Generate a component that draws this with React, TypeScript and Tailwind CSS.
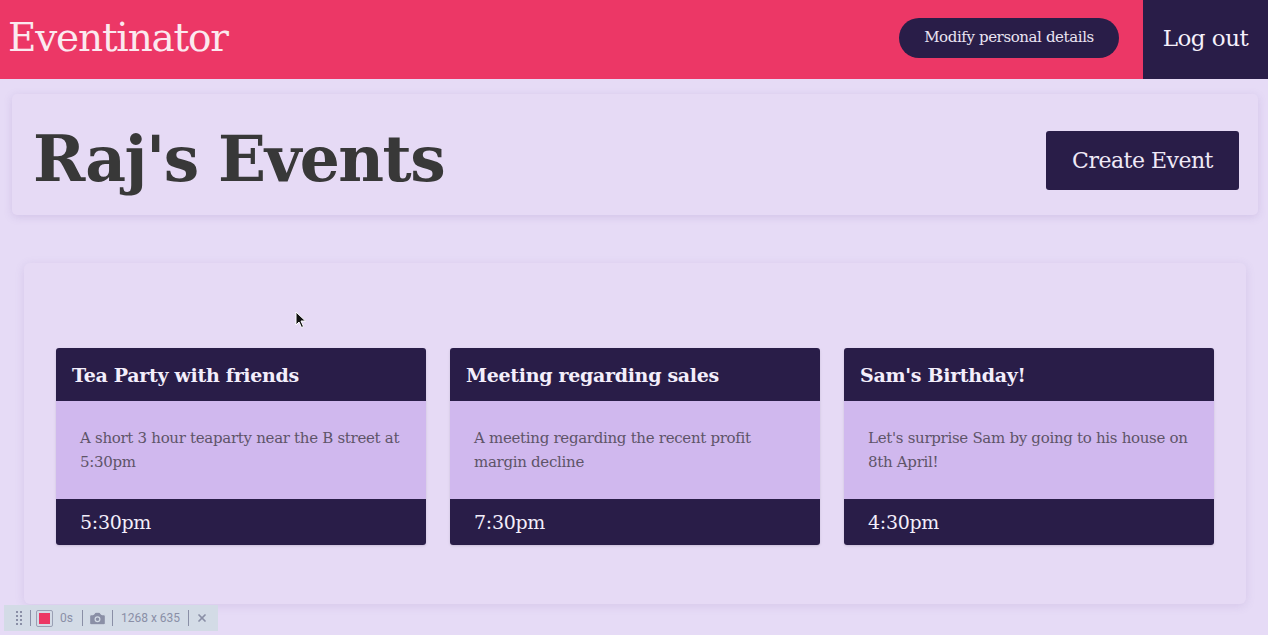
import { Camera, X } from 'lucide-react'

const events = [
  {
    title: 'Tea Party with friends',
    description: 'A short 3 hour teaparty near the B street at 5:30pm',
    time: '5:30pm',
  },
  {
    title: 'Meeting regarding sales',
    description: 'A meeting regarding the recent profit margin decline',
    time: '7:30pm',
  },
  {
    title: "Sam's Birthday!",
    description: "Let's surprise Sam by going to his house on 8th April!",
    time: '4:30pm',
  },
]

function EventCard({ title, description, time }: { title: string; description: string; time: string }) {
  return (
    <div className="flex flex-col rounded-[3px] overflow-hidden shadow-sm">
      <div className="h-[53px] bg-[#291d48] px-4 flex items-center pt-[2px]">
        <h3 className="text-[19px] font-bold text-[#f3eefb] tracking-[-0.3px]">{title}</h3>
      </div>
      <div className="h-[98px] bg-[#d0b8ee] px-6 pt-[25px]">
        <p className="text-[15px] leading-6 text-[#5e5468] tracking-[-0.3px]">{description}</p>
      </div>
      <div className="h-[46px] bg-[#291d48] px-6 flex items-center">
        <span className="text-[19px] text-[#f3eefb] tracking-[-0.3px]">{time}</span>
      </div>
    </div>
  )
}

export default function App() {
  return (
    <div
      className="min-h-[635px] bg-[#e6dbf6] relative"
      style={{ fontFamily: '"DejaVu Serif", serif' }}
    >
      {/* Header */}
      <header className="h-[79px] bg-[#ec3766] flex items-center">
        <h1 className="pl-2 text-[39px] text-[#fbe9ef] tracking-[-1.2px] flex-1 pb-[2px]">Eventinator</h1>
        <button className="h-10 w-[220px] rounded-full bg-[#291d48] text-[#e9e4f2] text-[15px] tracking-[-0.4px] mr-6 mb-[4px]">
          Modify personal details
        </button>
        <button className="h-full w-[125px] bg-[#291d48] text-[#f5f0fb] text-[23px] tracking-[-0.5px] pb-[3px]">
          Log out
        </button>
      </header>

      {/* Title bar */}
      <div className="pl-3 pr-[10px] pt-[15px]">
        <div className="h-[121px] rounded-[5px] bg-[#e6daf5] shadow-[0_2px_8px_rgba(120,90,170,0.18)] flex items-start justify-between pl-[21px] pr-[19px] pt-[37px]">
          <h2 className="text-[63px] leading-none font-bold text-[#383838] tracking-[-1.5px] -mt-[3px]">Raj's Events</h2>
          <button className="h-[59px] w-[193px] rounded-[3px] bg-[#291d48] text-[#efe9f7] text-[22px] tracking-[-0.5px]">
            Create Event
          </button>
        </div>
      </div>

      {/* Events */}
      <div className="pl-6 pr-[22px] pt-[48px] pb-[30px]">
        <div className="rounded-[6px] bg-[#e6daf5] shadow-[0_2px_10px_rgba(120,90,170,0.15)] px-8 pt-[85px] pb-[59px]">
          <div className="grid grid-cols-3 gap-6">
            {events.map(e => (
              <EventCard key={e.title} {...e} />
            ))}
          </div>
        </div>
      </div>

      {/* Cursor */}
      <svg className="absolute left-[295px] top-[311px]" width="12" height="18" viewBox="0 0 12 18">
        <path d="M1 1 L1 14 L4 11 L6.5 16.5 L8.5 15.5 L6 10 L10.5 10 Z" fill="#111" stroke="#fff" strokeWidth="1" />
      </svg>

      {/* Recorder toolbar */}
      <div
        className="absolute left-[4px] top-[605px] h-[26px] w-[214px] bg-[#d3dbe6] flex items-center text-[#8a8fa6] text-[12px]"
        style={{ fontFamily: '"Roboto", sans-serif' }}
      >
        <span className="ml-[12px] grid grid-cols-2 gap-x-[2px] gap-y-[2px]">
          {Array.from({ length: 8 }).map((_, i) => (
            <span key={i} className="w-[2px] h-[2px] bg-[#8a8fa6]" />
          ))}
        </span>
        <span className="ml-[8px] w-px h-[16px] bg-[#8a8fa6]" />
        <span className="ml-[5px] w-[17px] h-[17px] border border-[#9aa0b4] rounded-[2px] flex items-center justify-center">
          <span className="w-[11px] h-[11px] bg-[#ec3764]" />
        </span>
        <span className="ml-[7px]">0s</span>
        <span className="ml-[9px] w-px h-[16px] bg-[#8a8fa6]" />
        <Camera size={19} className="ml-[5px]" fill="#8a8fa6" stroke="#d3dbe6" strokeWidth={1.5} />
        <span className="ml-[5px] w-px h-[16px] bg-[#8a8fa6]" />
        <span className="ml-[8px]">1268 x 635</span>
        <span className="ml-[8px] w-px h-[16px] bg-[#8a8fa6]" />
        <X size={12} strokeWidth={3.5} className="ml-[7px]" />
      </div>
    </div>
  )
}
